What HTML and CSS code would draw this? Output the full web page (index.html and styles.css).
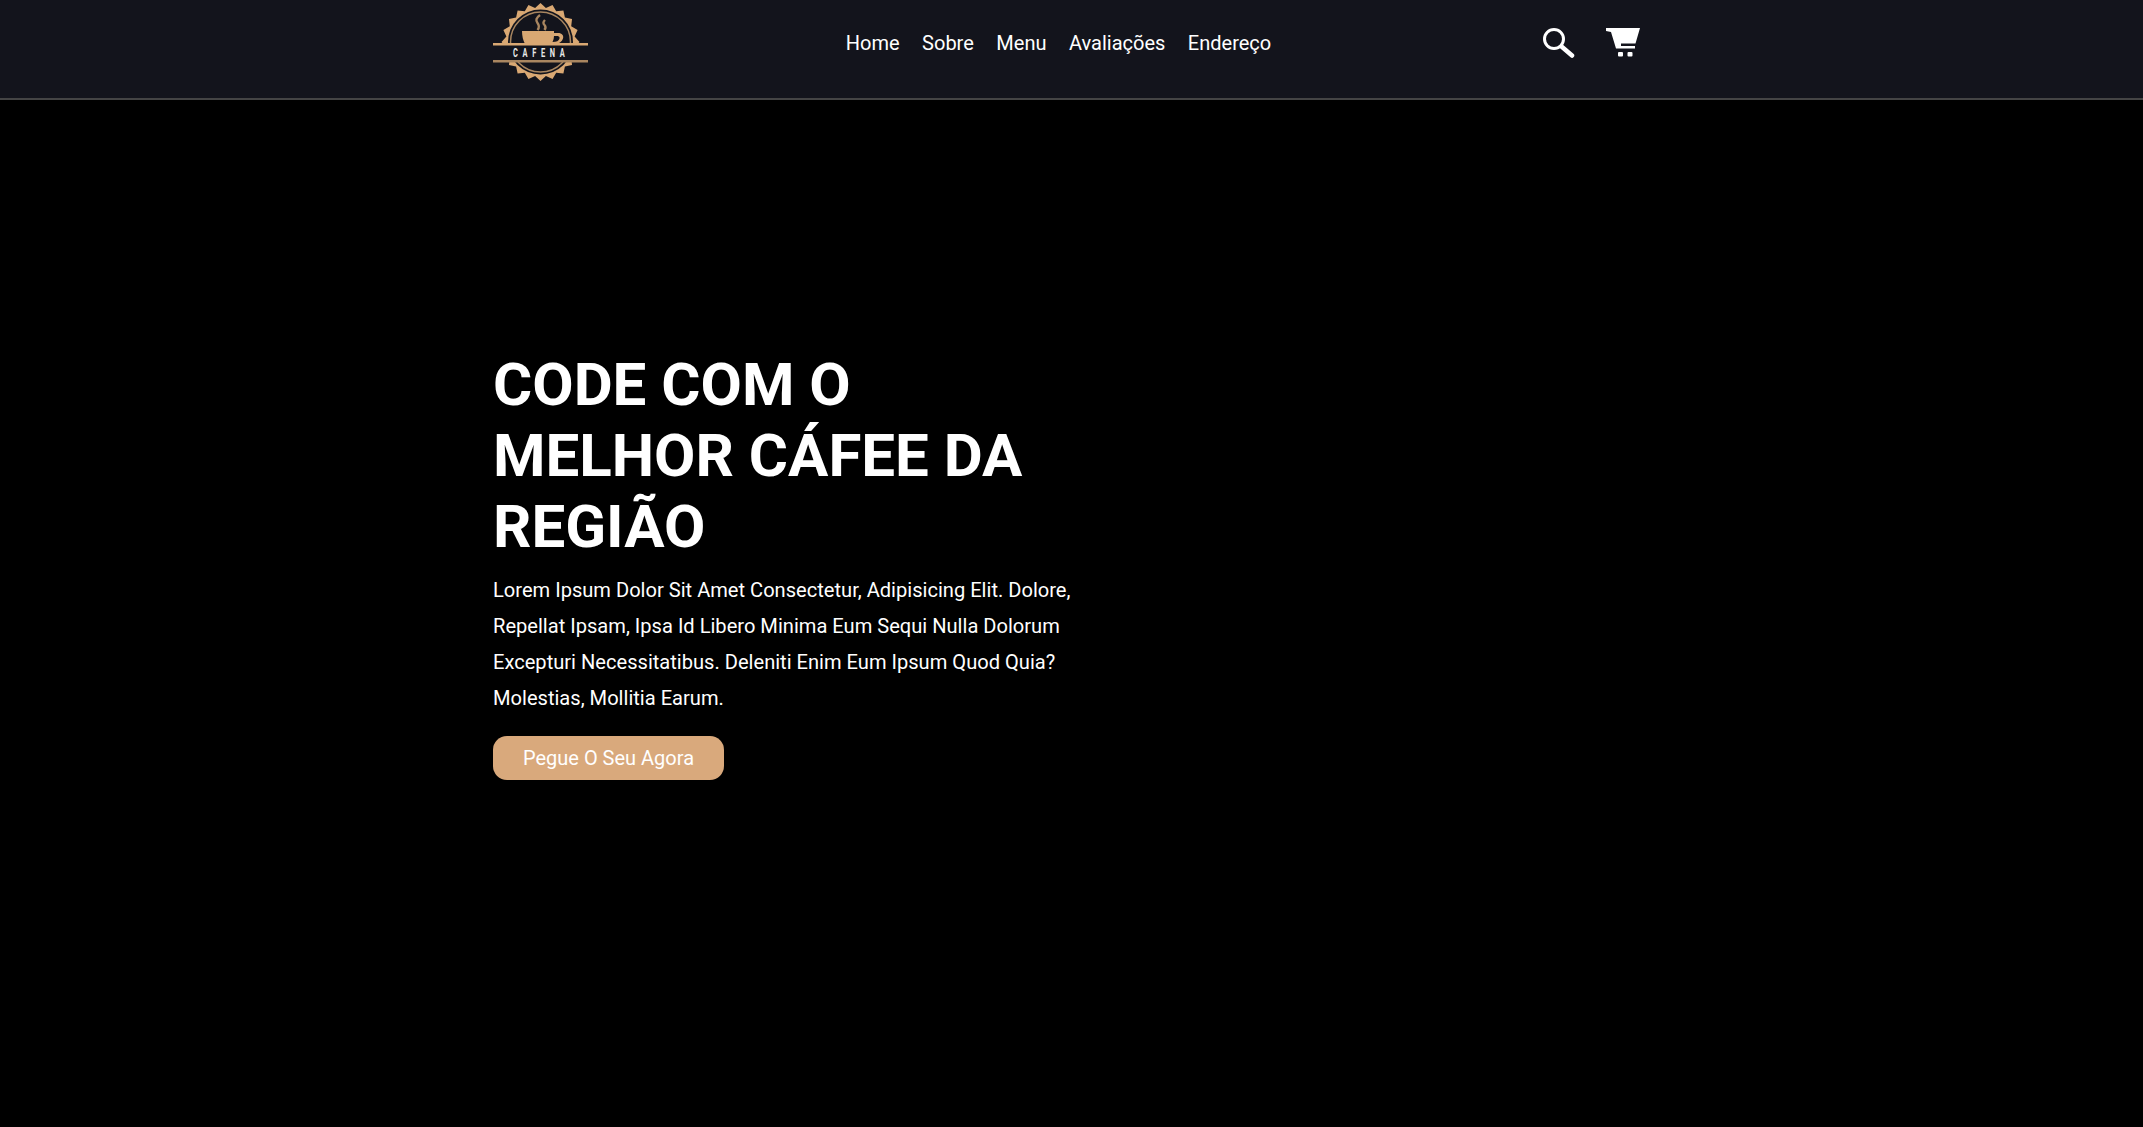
FILE: index.html
```html
<!DOCTYPE html>
<html lang="pt-BR">
<head>
    <meta charset="utf-8">
    <title>Cafena</title>
    <link rel="stylesheet" href="styles.css">
</head>
<body>
    <header class="header">
        <div class="header-inner">
            <a class="logo" href="#">
                <svg width="96" height="84" viewBox="0 0 96 84">
                    <g transform="translate(47.5 42)">
                        <polygon fill="#d9a873" points="0,-39 5.4,-34.1 12.05,-37.1 15.7,-30.7 22.9,-31.55 24.4,-24.4 31.55,-22.9 30.7,-15.7 37.1,-12.05 34.1,-5.4 39,0 34.1,5.4 37.1,12.05 30.7,15.7 31.55,22.9 24.4,24.4 22.9,31.55 15.7,30.7 12.05,37.1 5.4,34.1 0,39 -5.4,34.1 -12.05,37.1 -15.7,30.7 -22.9,31.55 -24.4,24.4 -31.55,22.9 -30.7,15.7 -37.1,12.05 -34.1,5.4 -39,0 -34.1,-5.4 -37.1,-12.05 -30.7,-15.7 -31.55,-22.9 -24.4,-24.4 -22.9,-31.55 -15.7,-30.7 -12.05,-37.1 -5.4,-34.1"/>
                        <circle r="32.5" fill="#13141c"/>
                        <circle r="30" fill="none" stroke="#a98660" stroke-width="1.5"/>
                    </g>
                    <path fill="#d9a873" fill-rule="evenodd" d="M29 31h32v2h4c4 0 6 2.500 5 5.500-1 3-4 5.500-9 5.500h-29c-2-4-3-8-3-13zM61 36c0 2-.5 4-1.500 6 4 0 6.500-1 7-3.500.5-2-1.500-2.500-3-2.500z"/>
                    <path fill="none" stroke="#a98660" stroke-width="2.400" d="M47 15c-4 3-4.500 5.500-2.500 8s2 4.500 0 7M52 20c-2 2-2 3.500-.5 5s1 3.500 0 5"/>
                    <rect x="0" y="44" width="96" height="17" fill="#13141c"/>
                    <rect x="0" y="43" width="95" height="2.500" fill="#d9a873"/>
                    <rect x="0" y="60" width="95" height="2.500" fill="#a98660"/>
                    <text class="logo-text" transform="translate(20 57) scale(.62 1)">CAFENA</text>
                </svg>
            </a>
            <nav class="nav">
                <a href="#">Home</a>
                <a href="#">Sobre</a>
                <a href="#">Menu</a>
                <a href="#">Avaliações</a>
                <a href="#">Endereço</a>
            </nav>
            <div class="icons">
                <svg width="32" height="30" viewBox="0 0 32 30">
                    <circle cx="11" cy="11" r="9.500" fill="none" stroke="#fff" stroke-width="3"/>
                    <path d="M18.500 18.500L29 27.500" stroke="#fff" stroke-width="4.500" stroke-linecap="round"/>
                </svg>
                <svg width="34" height="29" viewBox="0 0 34 29">
                    <path fill="#fff" d="M0 0H34L29.500 15.500H15V18H29V20.500H10L5 4 0 3z"/>
                    <rect x="12" y="24" width="5" height="4.500" rx="1" fill="#fff"/>
                    <rect x="21.500" y="24" width="5" height="4.500" rx="1" fill="#fff"/>
                </svg>
            </div>
        </div>
    </header>
    <main class="hero">
        <div class="hero-content">
            <h1>CODE COM O MELHOR CÁFEE DA REGIÃO</h1>
            <p>Lorem Ipsum Dolor Sit Amet Consectetur, Adipisicing Elit. Dolore, Repellat Ipsam, Ipsa Id Libero Minima Eum Sequi Nulla Dolorum Excepturi Necessitatibus. Deleniti Enim Eum Ipsum Quod Quia? Molestias, Mollitia Earum.</p>
            <a class="btn" href="#">Pegue O Seu Agora</a>
        </div>
    </main>
</body>
</html>
```

FILE: styles.css
```css
* {
    margin: 0;
    padding: 0;
    box-sizing: border-box;
}
html, body {
    height: 100%;
}
body {
    font-family: Roboto, sans-serif;
    background-color: #000;
    color: #fff;
    overflow: hidden;
}
a {
    color: #fff;
    text-decoration: none;
}
.header {
    background-color: #13141c;
    height: 100px;
    border-bottom: 2px solid #444;
}
.header-inner {
    width: 1147px;
    height: 98px;
    margin-left: 493px;
    padding-bottom: 13px;
    display: flex;
    align-items: center;
    justify-content: space-between;
}
.logo {
    display: block;
    height: 84px;
    align-self: flex-start;
}
.logo-text {
    font-family: Roboto, sans-serif;
    font-size: 12px;
    font-weight: 700;
    letter-spacing: 7.500px;
    fill: #e8e8e8;
}
.nav {
    display: flex;
    gap: 22.500px;
    font-size: 20px;
    margin-right: 15px;
}
.icons {
    display: flex;
    align-items: center;
    gap: 31px;
}
.hero {
    padding: 249px 0 0 493px;
}
.hero-content {
    width: 590px;
}
.hero-content h1 {
    font-size: 60px;
    line-height: 71px;
    font-weight: 700;
}
.hero-content p {
    font-size: 20.100px;
    line-height: 36px;
    font-weight: 400;
    margin-top: 10px;
}
.btn {
    display: inline-block;
    margin-top: 20px;
    width: 231px;
    height: 44px;
    line-height: 44px;
    text-align: center;
    font-size: 20px;
    background-color: #d9a97c;
    border-radius: 14px;
}
```
